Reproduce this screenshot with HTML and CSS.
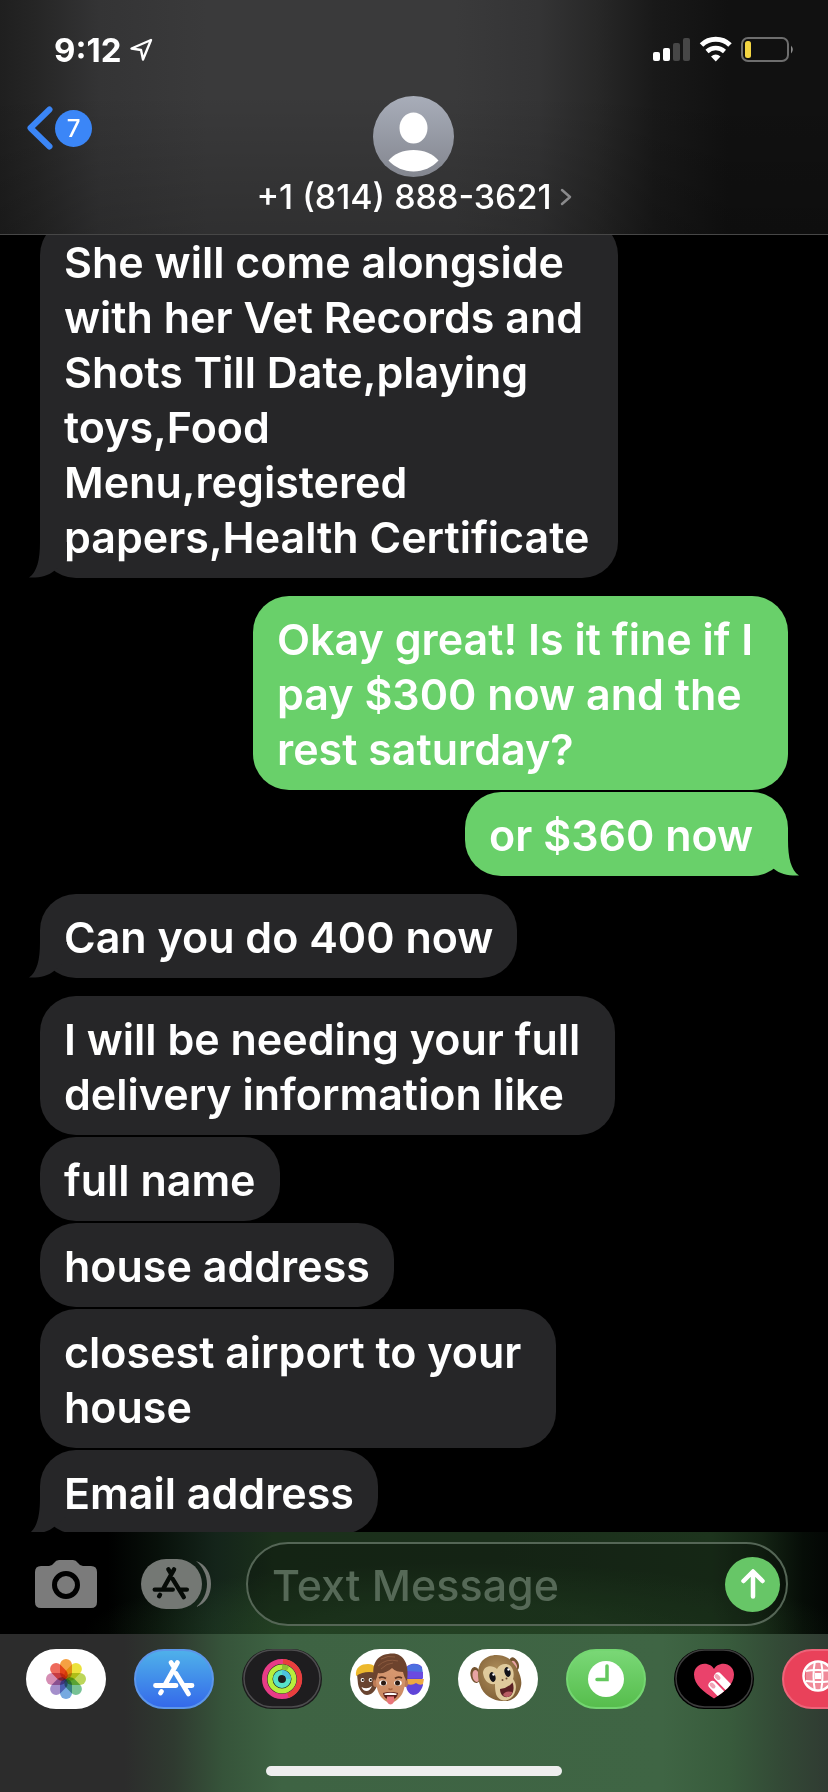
FILE: index.html
```html
<!DOCTYPE html>
<html lang="en">
<head>
<meta charset="utf-8">
<meta name="viewport" content="width=device-width, initial-scale=1">
<title>Messages</title>
<link rel="stylesheet" href="styles.css">
</head>
<body>
<svg class="defs" aria-hidden="true">
  <defs>
    <linearGradient id="g-avatar" x1="0" y1="0" x2="0" y2="1"><stop offset="0" stop-color="#a8adb9"/><stop offset="1" stop-color="#83868f"/></linearGradient>
    <linearGradient id="g-store" x1="0" y1="0" x2="0" y2="1"><stop offset="0" stop-color="#4fb2ea"/><stop offset="1" stop-color="#3468ea"/></linearGradient>
    <linearGradient id="g-clock" x1="0" y1="0" x2="0" y2="1"><stop offset="0" stop-color="#7ad877"/><stop offset="1" stop-color="#56bd4c"/></linearGradient>
    <linearGradient id="g-skin" x1="0" y1="0" x2="0" y2="1"><stop offset="0" stop-color="#d99a72"/><stop offset="1" stop-color="#c98860"/></linearGradient>
    <radialGradient id="g-fur" cx=".45" cy=".4" r=".65"><stop offset="0" stop-color="#b3935f"/><stop offset="1" stop-color="#7d5c33"/></radialGradient>
    <clipPath id="c-heart"><path d="M40 49.500C30 43 20 36 20 25.500C20 19 25 14.700 30.500 14.700C35 14.700 38.500 17 40 20C41.500 17 45 14.700 49.500 14.700C55 14.700 60 19 60 25.500C60 36 50 43 40 49.500Z"/></clipPath>
    <clipPath id="c-globe"><circle cx="36" cy="27" r="14"/></clipPath>
  </defs>
  <symbol id="tail" viewBox="0 0 40 36"><path d="M11 0C11 18 8 30 0 35.500C10 36 19 34 25 29L38 18V0Z" fill="currentColor"/></symbol>
  <symbol id="store-mark" viewBox="0 0 80 60">
    <g fill="none" stroke="currentColor" stroke-width="4.800" stroke-linecap="round">
      <path d="M43.500 13.500L31.500 35M37 13.500L39.500 17.500M42 24.500L54.500 45M21.500 36.500H42M50 36.500H58M26.500 44L27.500 42.500"/>
    </g>
  </symbol>
</svg>

<div class="phone">
  <header class="header">
    <div class="status">
      <div class="status-left">
        <time class="clock">9:12</time>
        <svg width="24" height="24" viewBox="0 0 24 24" fill="none" stroke="#fff" stroke-width="2.400" stroke-linejoin="round" aria-hidden="true"><path d="M22 2L2.500 10.500L12 12L14 21.500Z"/></svg>
      </div>
      <svg width="142" height="28" viewBox="0 0 142 28" aria-hidden="true">
        <rect x="0" y="16" width="7" height="9" rx="2" fill="#fff"/>
        <rect x="10" y="12" width="7" height="13" rx="2" fill="#fff"/>
        <rect x="20" y="7" width="7" height="18" rx="2" fill="#474747"/>
        <rect x="30" y="2" width="7" height="23" rx="2" fill="#474747"/>
        <path d="M48.500 9A20.500 20.500 0 0 1 77 9" fill="none" stroke="#fff" stroke-width="5"/>
        <path d="M54 15.500A13 13 0 0 1 71.500 15.500" fill="none" stroke="#fff" stroke-width="4.500"/>
        <path d="M58 20.500Q62.800 16.500 67.500 20.500L62.800 25.500Z" fill="#fff"/>
        <rect x="89" y="2" width="46" height="23" rx="6" fill="none" stroke="#6e6e6e" stroke-width="2"/>
        <path d="M138 9.500Q141.500 13.500 138 17.500Z" fill="#8b8b8b"/>
        <rect x="92" y="5" width="6" height="17" rx="2.500" fill="#f3d542"/>
      </svg>
    </div>
    <div class="nav">
      <button class="back" type="button" aria-label="Back, 7 unread">
        <svg width="26" height="44" viewBox="0 0 26 44" fill="none" stroke="#3b86f7" stroke-width="6" stroke-linecap="round" stroke-linejoin="round" aria-hidden="true"><path d="M22.500 3.500L3.500 22L22.500 40.500"/></svg>
        <span class="badge">7</span>
      </button>
      <button class="contact" type="button">
        <svg width="81" height="81" viewBox="0 0 81 81" aria-hidden="true">
          <circle cx="40.500" cy="40.500" r="40.500" fill="url(#g-avatar)"/>
          <ellipse cx="40.500" cy="32" rx="14" ry="15.500" fill="#fff"/>
          <path d="M15.500 64.500C21 58 30 54 40.500 54S60 58 65.500 64.500C59 71.500 50 75.500 40.500 75.500S22 71.500 15.500 64.500Z" fill="#fff"/>
        </svg>
        <span class="contact-name">+1 (814) 888-3621
          <svg width="12" height="18" viewBox="0 0 12 18" fill="none" stroke="#8a8a8c" stroke-width="2.500" stroke-linecap="round" stroke-linejoin="round" aria-hidden="true"><path d="M2 2L10 9L2 16"/></svg>
        </span>
      </button>
    </div>
  </header>

  <main class="thread">
    <p class="bubble in tailed">She will come alongside 
with her Vet Records and 
Shots Till Date,playing 
toys,Food 
Menu,registered 
papers,Health Certificate<svg class="tail" aria-hidden="true"><use href="#tail"/></svg></p>
    <p class="bubble out turn">Okay great! Is it fine if I 
pay $300 now and the 
rest saturday?</p>
    <p class="bubble out tailed">or $360 now <svg class="tail" aria-hidden="true"><use href="#tail"/></svg></p>
    <p class="bubble in turn tailed">Can you do 400 now<svg class="tail" aria-hidden="true"><use href="#tail"/></svg></p>
    <p class="bubble in turn">I will be needing your full 
delivery information like</p>
    <p class="bubble in">full name</p>
    <p class="bubble in">house address</p>
    <p class="bubble in">closest airport to your 
house</p>
    <p class="bubble in tailed">Email address<svg class="tail" aria-hidden="true"><use href="#tail"/></svg></p>
  </main>

  <footer class="footer">
    <form class="composer">
      <button class="tool" type="button" aria-label="Camera">
        <svg width="62" height="48" viewBox="0 0 62 48" aria-hidden="true">
          <path d="M6 6H14Q17 6 19 3T24 0H38Q41 0 43 3T48 6H56Q62 6 62 12V42Q62 48 56 48H6Q0 48 0 42V12Q0 6 6 6Z" fill="#7b7b7b"/>
          <circle cx="31" cy="25" r="11.500" fill="none" stroke="#000" stroke-width="5"/>
        </svg>
      </button>
      <button class="tool" type="button" aria-label="Apps">
        <svg width="70" height="50" viewBox="0 0 70 50" aria-hidden="true">
          <rect x="0" y="0" width="61" height="50" rx="25" fill="#747874"/>
          <path d="M55 2C65 5 70 15 70 25S65 45 55 48C62 42 66 34 66 25S62 8 55 2Z" fill="#747874"/>
          <g transform="translate(30 24) scale(.88) translate(-40 -29)" fill="none" stroke="#060b07" stroke-width="5" stroke-linecap="round">
            <path d="M43.500 13.500L31.500 35M37 13.500L39.500 17.500M42 24.500L54.500 45M21.500 36.500H42M50 36.500H58M26.500 44L27.500 42.500"/>
          </g>
        </svg>
      </button>
      <div class="field">
        <input class="field-input" type="text" placeholder="Text Message" aria-label="Text Message">
        <button class="send" type="submit" aria-label="Send">
          <svg width="24" height="30" viewBox="0 0 24 30" fill="none" stroke="#fff" stroke-width="4.500" stroke-linecap="round" stroke-linejoin="round" aria-hidden="true"><path d="M12 27.500V3M2.500 12L12 2.500L21.500 12"/></svg>
        </button>
      </div>
    </form>

    <nav class="apps" aria-label="iMessage apps">
      <button class="app app-white" type="button" aria-label="Photos">
        <svg viewBox="0 0 80 60" aria-hidden="true">
          <g class="petals">
            <rect x="34" y="10" width="12" height="20" rx="6" fill="#f5a042"/>
            <rect x="34" y="10" width="12" height="20" rx="6" fill="#ece23c" transform="rotate(45 40 30)"/>
            <rect x="34" y="10" width="12" height="20" rx="6" fill="#bcd65a" transform="rotate(90 40 30)"/>
            <rect x="34" y="10" width="12" height="20" rx="6" fill="#78c295" transform="rotate(135 40 30)"/>
            <rect x="34" y="10" width="12" height="20" rx="6" fill="#76a9e0" transform="rotate(180 40 30)"/>
            <rect x="34" y="10" width="12" height="20" rx="6" fill="#a48fcb" transform="rotate(225 40 30)"/>
            <rect x="34" y="10" width="12" height="20" rx="6" fill="#d58eb4" transform="rotate(270 40 30)"/>
            <rect x="34" y="10" width="12" height="20" rx="6" fill="#ee6a5c" transform="rotate(315 40 30)"/>
          </g>
        </svg>
      </button>
      <button class="app" type="button" aria-label="App Store">
        <svg viewBox="0 0 80 60" aria-hidden="true"><rect x="1" y="1" width="78" height="58" rx="29" fill="url(#g-store)" stroke="#5c96ea" stroke-width="2"/><use href="#store-mark" width="80" height="60" color="#fff"/></svg>
      </button>
      <button class="app" type="button" aria-label="Activity">
        <svg viewBox="0 0 80 60" aria-hidden="true">
          <rect width="80" height="60" rx="30" fill="#1b1b1c"/><rect x="2" y="1" width="76" height="57" rx="28.500" fill="#1e1d1f" stroke="#4d4c4e" stroke-width="1.500"/>
          <g fill="none" stroke-width="5">
            <circle cx="40" cy="30" r="17.500" stroke="#e83c86"/><path d="M41 12.500A17.500 17.500 0 0 1 46 46.500" stroke="#e8403c"/>
            <circle cx="40" cy="30" r="12" stroke="#b8ee3d"/><path d="M40 18A12 12 0 0 1 46 19.600" stroke="#8fbf35"/>
            <circle cx="40" cy="30" r="6.500" stroke="#58e2c9"/><path d="M40 23.500A6.500 6.500 0 0 1 46.500 30" stroke="#4cc3df"/>
          </g>
        </svg>
      </button>
      <button class="app app-white" type="button" aria-label="Memoji">
        <svg viewBox="0 0 80 60" aria-hidden="true">
          <path d="M7 25C7 18 27 18 27 25V36C26 42 21 46 17 46S9 41 8 35Z" fill="#694430"/>
          <path d="M6 27C5 18 11 15 18 15S26 19 26 24C19 22 12 23 6 27Z" fill="#edb82c"/>
          <circle cx="12.500" cy="31" r="1.900" fill="#fff"/><circle cx="20.500" cy="31" r="1.900" fill="#fff"/><circle cx="12.800" cy="31" r="1.100" fill="#1d120c"/><circle cx="20.800" cy="31" r="1.100" fill="#1d120c"/>
          <path d="M11.500 38Q17 41 22 37Q20 42 16.500 42T11.500 38Z" fill="#fff"/>
          <path d="M55 20C58 14 68 13 72 18L73 36C71 43 67 46 63 46C59 45 57 42 56 37Z" fill="#6045d8"/>
          <path d="M56 20C59 14 68 13 72 19L73 26H56Z" fill="#4d6fe0"/><path d="M57 22L73 23V29H57Z" fill="#6a4be0"/>
          <path d="M57 30H74L73 35Q70 37 66 34Q62 37 57 35Z" fill="#eda942"/>
          <ellipse cx="25.500" cy="34" rx="2.500" ry="4" fill="#bd7b55"/><ellipse cx="55.500" cy="34" rx="2.500" ry="4" fill="#bd7b55"/>
          <path d="M26 20C30 14 50 14 55 22C56 36 54 44 49 49Q40.500 58 32 49C27 44 25 34 26 20Z" fill="url(#g-skin)"/>
          <path d="M25 32C20 16 27 6 38 5C52 2 60 13 57 32C55 30 54 27 53 23C49 23 45 22 42 19C38 23 32 25 28 24Q27 29 25 32Z" fill="#6d432d"/>
          <path d="M31 10Q38 6 45 8M28 17Q36 9 48 12M31 20Q37 14 43 14" stroke="#8b5a3e" fill="none"/>
          <path d="M29 29Q32 27 36 29.500M45 29.500Q48 27 52 29" stroke="#5a3320" stroke-width="1.800" fill="none"/>
          <ellipse cx="33" cy="34" rx="3.800" ry="2.800" fill="#fff"/><ellipse cx="48" cy="34" rx="3.800" ry="2.800" fill="#fff"/>
          <circle cx="33.500" cy="34" r="2.500" fill="#2b1a12"/><circle cx="47.500" cy="34" r="2.500" fill="#2b1a12"/>
          <path d="M38.500 39.500Q40.500 41.500 42.500 39.500" stroke="#a8653f" stroke-width="1.500" fill="none"/>
          <path d="M33 44Q40.500 42 48 44Q47 50.500 40.500 50.500T33 44Z" fill="#571b18"/><path d="M34.500 44.500Q40.500 43 46.500 44.500V46H34.500Z" fill="#fff"/>
          <path d="M37 47.500H44V53Q40.500 58 37 53Z" fill="#e8767b"/>
        </svg>
      </button>
      <button class="app app-white" type="button" aria-label="Animoji">
        <svg viewBox="0 0 80 60" aria-hidden="true">
          <ellipse cx="17.500" cy="26" rx="5" ry="8" transform="rotate(-10 17.500 26)" fill="#73532f"/><ellipse cx="18" cy="27" rx="3.500" ry="6" transform="rotate(-10 18 27)" fill="#e8a3a3"/>
          <ellipse cx="56" cy="15" rx="4.500" ry="7" transform="rotate(-25 56 15)" fill="#73532f"/><ellipse cx="56" cy="16" rx="2.500" ry="4.500" transform="rotate(-25 56 16)" fill="#e8a3a3"/>
          <path d="M24 12C30 5 42 4 50 9C58 15 65 28 63 37C61 47 54 53 45 52C35 52 25 46 22 36C19 28 19 18 24 12Z" fill="url(#g-fur)"/>
          <path d="M25 24C25 17 34 15 39 20C42 14 51 13 54 19C56 22 56 27 55 30C60 36 58 45 53 49C47 54 40 51 38 45C37 41 37 38 37 35C30 36 26 31 25 24Z" fill="#dfca9c"/>
          <ellipse cx="34.500" cy="28" rx="3" ry="5" transform="rotate(-15 34.500 28)" fill="#121118"/><ellipse cx="49.500" cy="23" rx="3" ry="5" transform="rotate(-15 49.500 23)" fill="#121118"/>
          <circle cx="35.500" cy="25.500" r="1.200" fill="#fff"/><circle cx="50.500" cy="20.500" r="1.200" fill="#fff"/>
          <circle cx="44.500" cy="31" r="1" fill="#6c4a31"/><circle cx="48.500" cy="29.500" r="1" fill="#6c4a31"/>
          <path d="M42 40Q50 39 54.500 33.500C57 39 55 47 50 48C45 49 42 45 42 40Z" fill="#5b2024"/><path d="M45 46Q47 41 54.500 43Q53 47 50 48Q47 48.500 45 46Z" fill="#b85c63"/>
        </svg>
      </button>
      <button class="app" type="button" aria-label="Check in">
        <svg viewBox="0 0 80 60" aria-hidden="true"><rect x="1" y="1" width="78" height="58" rx="29" fill="url(#g-clock)" stroke="#74d671" stroke-width="2"/><circle cx="40" cy="30" r="18" fill="#fff"/><path d="M41 17V30.500H31" fill="none" stroke="#63c85d" stroke-width="3.500" stroke-linecap="round"/></svg>
      </button>
      <button class="app" type="button" aria-label="Digital Touch">
        <svg viewBox="0 0 80 60" aria-hidden="true">
          <rect width="80" height="60" rx="30" fill="#000"/><rect x="2" y="1" width="76" height="57" rx="28.500" fill="#000" stroke="#3d3d3d" stroke-width="1.500"/>
          <g clip-path="url(#c-heart)">
            <rect x="18" y="12" width="44" height="40" fill="#ea426b"/>
            <path d="M44 27.500L60 44M38.500 36L54 52" stroke="#fff" stroke-width="8" stroke-linecap="round"/>
            <path d="M42.500 27L44.500 29M37.500 35.500L39.500 37.500" stroke="#f0a3b5" stroke-width="4" stroke-linecap="round"/>
          </g>
        </svg>
      </button>
      <button class="app" type="button" aria-label="Images">
        <svg viewBox="0 0 80 60" aria-hidden="true">
          <rect x="1" y="1" width="78" height="58" rx="29" fill="#e9415a" stroke="#ee6379" stroke-width="2"/>
          <circle cx="36" cy="27" r="14" fill="#f08a99"/>
          <g clip-path="url(#c-globe)" fill="none" stroke="#fff" stroke-width="2">
            <path d="M20 22.500Q36 19.500 52 22.500M20 31.500Q36 34.500 52 31.500M33 12Q30 27 33 42M39 12Q42 27 39 42"/>
            <path d="M25 15Q20 27 25 40M47 15Q52 27 47 40" stroke="#e9415a"/>
          </g>
          <rect x="33" y="24" width="6" height="6" fill="#fff"/>
          <circle cx="36" cy="27" r="14.500" fill="none" stroke="#fff" stroke-width="2.500"/>
        </svg>
      </button>
    </nav>
    <div class="home-indicator"></div>
  </footer>
</div>
</body>
</html>
```
FILE: styles.css
```css
* { box-sizing: border-box; }

html, body { height: 100%; }

body {
  margin: 0;
  background: #000;
  color: #fff;
  font-family: Inter, "Liberation Sans", sans-serif;
}

button {
  margin: 0;
  padding: 0;
  border: 0;
  background: none;
  color: inherit;
  font: inherit;
  cursor: pointer;
}

svg { display: block; }

.defs {
  position: absolute;
  width: 0;
  height: 0;
}

.phone {
  display: flex;
  flex-direction: column;
  height: 100vh;
  overflow: hidden;
}

/* Header */
.header {
  flex: none;
  padding-bottom: 17px;
  border-bottom: 1px solid #474747;
  background:
    linear-gradient(180deg, transparent 40%, rgba(0, 0, 0, 0.18)),
    linear-gradient(90deg, #1f1f1f 0%, #252525 4%, #343435 12%, #3a3a3b 25%, #3a3a3b 55%, #343435 65%, #282828 72%, #191919 79%, #111 88%, #111 100%);
}

.status {
  display: flex;
  align-items: center;
  justify-content: space-between;
  padding: 30px 33px 0 54px;
}

.status-left {
  display: flex;
  align-items: center;
  gap: 8px;
}

.clock {
  font-size: 33px;
  font-weight: 700;
  line-height: 40px;
}

.nav {
  display: grid;
  grid-template-columns: 1fr auto 1fr;
  align-items: start;
  padding: 26px 27px 0;
}

.back {
  display: flex;
  align-items: center;
  justify-self: start;
  gap: 2px;
  margin-top: 10px;
}

.badge {
  display: grid;
  place-items: center;
  width: 37px;
  height: 37px;
  border-radius: 50%;
  background: #3b86f7;
  font-size: 24px;
  font-weight: 500;
}

.contact {
  display: flex;
  flex-direction: column;
  align-items: center;
}

.contact-name {
  display: flex;
  align-items: center;
  gap: 8px;
  font-size: 34px;
  font-weight: 500;
  line-height: 40px;
}

/* Conversation */
.thread {
  display: flex;
  flex: 1;
  flex-direction: column;
  justify-content: flex-end;
  gap: 2px;
  min-height: 0;
  margin-bottom: -2px;
  padding: 0 40px;
  overflow: hidden;
}

.bubble {
  position: relative;
  flex: none;
  margin: 0;
  padding: 16px 24px 13px;
  border-radius: 36px;
  font-size: 43px;
  font-weight: 600;
  line-height: 55px;
  white-space: pre;
}

.in {
  align-self: flex-start;
  background: #262628;
  color: #fff;
}

.out {
  align-self: flex-end;
  background: #69d06a;
  color: #fff;
}

.turn { margin-top: 16px; }

.tail {
  position: absolute;
  bottom: 0;
  left: -11px;
  width: 40px;
  height: 36px;
  color: #262628;
}

.out .tail {
  right: -11px;
  left: auto;
  color: #69d06a;
  transform: scaleX(-1);
}

/* Composer */
.footer {
  position: relative;
  flex: none;
}

.composer {
  display: flex;
  align-items: center;
  padding: 10px 40px 8px 35px;
  background:
    radial-gradient(46% 70% at 56% 100%, rgba(48, 92, 48, 0.4) 40%, transparent 100%),
    linear-gradient(90deg, #000 0%, #000 13%, #08100a 19%, #14241a 26%, #1b301b 33%, #1b2f1b 60%, #1d341d 86%, #142414 92%, #060d07 97%, #030604 100%);
}

.tool {
  flex: none;
  margin-right: 44px;
}

.tool + .tool { margin-right: 35px; }

.field {
  display: flex;
  flex: 1;
  align-items: center;
  min-width: 0;
  height: 84px;
  padding: 0 6px 0 24px;
  border: 2px solid #556656;
  border-radius: 42px;
  background: rgba(0, 0, 0, 0.25);
}

.field-input {
  flex: 1;
  min-width: 0;
  height: 56px;
  padding: 2px 0 0;
  border: 0;
  outline: 0;
  background: none;
  color: #fff;
  font: 500 43px Inter, "Liberation Sans", sans-serif;
}

.field-input::placeholder {
  color: #566957;
  opacity: 1;
}

.send {
  display: grid;
  flex: none;
  place-items: center;
  width: 55px;
  height: 55px;
  border-radius: 50%;
  background: #67c667;
}

/* App drawer */
.apps {
  display: flex;
  gap: 28px;
  height: 158px;
  padding: 15px 0 0 26px;
  overflow: hidden;
  background: linear-gradient(90deg, #2c2c2c 0%, #2c2c2c 15%, #2f3a30 21%, #36543a 27%, #3e6343 34%, #3f6544 80%, #385b3c 88%, #334a36 94%, #303b32 100%);
}

.app {
  flex: none;
  width: 80px;
  height: 60px;
  border-radius: 30px;
}

.app-white { background: #fff; }

.app svg {
  width: 80px;
  height: 60px;
}

.petals rect { mix-blend-mode: multiply; }

.home-indicator {
  position: absolute;
  bottom: 16px;
  left: 50%;
  width: 296px;
  height: 10px;
  border-radius: 5px;
  background: #eee;
  transform: translateX(-50%);
}
```
